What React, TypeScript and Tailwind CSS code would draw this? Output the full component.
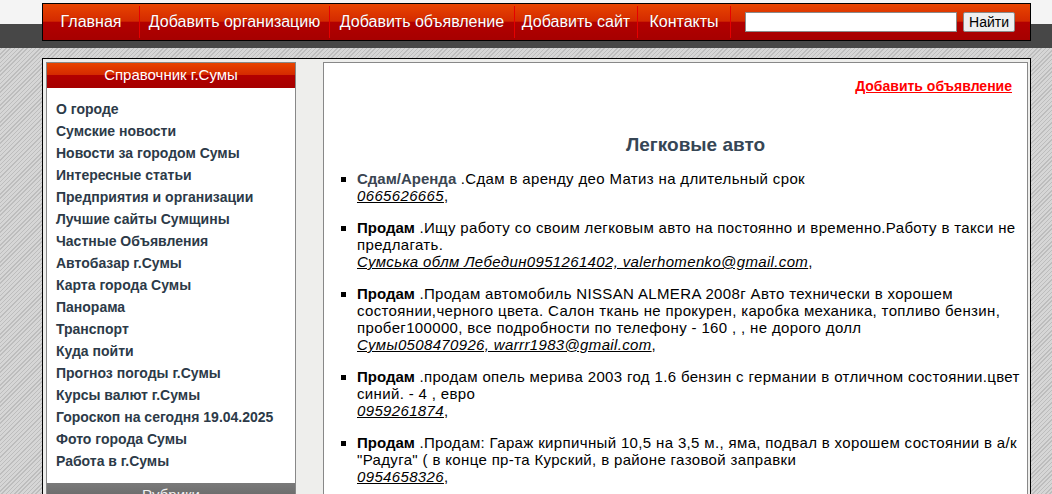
import React from "react";

const navItems: { label: string; w: string }[] = [
  { label: "Главная", w: "w-[96px]" },
  { label: "Добавить организацию", w: "w-[189px]" },
  { label: "Добавить объявление", w: "w-[184px]" },
  { label: "Добавить сайт", w: "w-[122px]" },
  { label: "Контакты", w: "w-[92px]" },
];

const links = [
  "О городе",
  "Сумские новости",
  "Новости за городом Сумы",
  "Интересные статьи",
  "Предприятия и организации",
  "Лучшие сайты Сумщины",
  "Частные Объявления",
  "Автобазар г.Сумы",
  "Карта города Сумы",
  "Панорама",
  "Транспорт",
  "Куда пойти",
  "Прогноз погоды г.Сумы",
  "Курсы валют г.Сумы",
  "Гороскоп на сегодня 19.04.2025",
  "Фото города Сумы",
  "Работа в г.Сумы",
];

const ads: { label: string; first?: boolean; text: string; contact: string }[] = [
  {
    label: "Сдам/Аренда",
    first: true,
    text: ".Сдам в аренду део Матиз на длительный срок",
    contact: "0665626665",
  },
  {
    label: "Продам",
    text: ".Ищу работу со своим легковым авто на постоянно и временно.Работу в такси не предлагать.",
    contact: "Сумська облм Лебедин0951261402, valerhomenko@gmail.com",
  },
  {
    label: "Продам",
    text: ".Продам автомобиль NISSAN ALMERA 2008г Авто технически в хорошем состоянии,черного цвета. Салон ткань не прокурен, каробка механика, топливо бензин, пробег100000, все подробности по телефону - 160 , , не дорого долл",
    contact: "Сумы0508470926, warrr1983@gmail.com",
  },
  {
    label: "Продам",
    text: ".продам опель мерива 2003 год 1.6 бензин с германии в отличном состоянии.цвет синий. - 4 , евро",
    contact: "0959261874",
  },
  {
    label: "Продам",
    text: '.Продам: Гараж кирпичный 10,5 на 3,5 м., яма, подвал в хорошем состоянии в а/к "Радуга" ( в конце пр-та Курский, в районе газовой заправки',
    contact: "0954658326",
  },
];

export default function App() {
  return (
    <div className="min-h-screen bg-[repeating-linear-gradient(135deg,#d6d6d6_0px,#d6d6d6_2px,#bdbdbd_2px,#bdbdbd_3px)] font-['Liberation_Sans',Arial,sans-serif]">
      {/* header band */}
      <div className="h-[48px] bg-[linear-gradient(to_bottom,#f4f4f4_0px,#f4f4f4_24px,#474747_24px,#474747_48px)] pt-[3px]">
        <div className="ml-[42px] w-[989px] h-[38px] border border-black flex items-stretch bg-[linear-gradient(to_bottom,#e84400_0%,#d42a00_48%,#b20000_50%,#a60000_100%)]">
          {navItems.map((it) => (
            <React.Fragment key={it.label}>
              <div
                className={`${it.w} flex items-center justify-center text-white text-[16px] [text-shadow:0_0_1px_rgba(0,0,0,0.3)]`}
              >
                {it.label}
              </div>
              <div className="w-px bg-[#e60000] my-[2px]" />
            </React.Fragment>
          ))}
          <div className="flex items-center pl-[14px] gap-[6px]">
            <input
              type="text"
              className="w-[212px] h-[20px] bg-white border border-[#8a8a8a] outline-none"
            />
            <button className="h-[20px] w-[52px] bg-[#efefef] border border-[#8a8a8a] rounded-[2px] text-[14px] text-black leading-none">
              Найти
            </button>
          </div>
        </div>
      </div>

      {/* main container */}
      <div className="ml-[42px] mt-[10px] w-[989px] border border-black bg-[#eeeeec] pt-[3px] pl-[3px] pr-[2px] flex items-start">
        {/* sidebar */}
        <div className="w-[250px] shrink-0 border border-[#888] bg-white">
          <div className="h-[25px] flex items-center justify-center text-white text-[15px] bg-[linear-gradient(to_bottom,#e84400_0%,#d42a00_48%,#b20000_50%,#a60000_100%)]">
            Справочник г.Сумы
          </div>
          <ul className="pt-[10px] pl-[9px] pb-[11px]">
            {links.map((l) => (
              <li
                key={l}
                className="text-[14px] font-bold leading-[22px] text-[#2c3a48]"
              >
                {l}
              </li>
            ))}
          </ul>
          <div className="h-[25px] flex items-center justify-center text-[#f0f0f0] text-[15px] bg-[linear-gradient(to_bottom,#7a7a7a,#5e5e5e)]">
            Рубрики
          </div>
        </div>

        {/* content */}
        <div className="ml-[27px] flex-1 border border-[#888] bg-white min-h-[440px]">
          <div className="pt-[15px] pr-[15px] text-right leading-[16px]">
            <a className="text-[14px] font-bold text-[#ff0000] underline">
              Добавить объявление
            </a>
          </div>
          <h1 className="mt-[40px] pl-[40px] text-center text-[19px] leading-[22px] font-bold text-[#364655]">
            Легковые авто
          </h1>
          <ul className="mt-[14px] pl-[33px] mr-[4px] list-[square] text-[15px] tracking-[0.35px] leading-[17px] text-black">
            {ads.map((a, i) => (
              <li key={i} className="mb-[15px]">
                <b
                  className={`tracking-normal ${
                    a.first ? "text-[#3a4552]" : "text-black"
                  }`}
                >
                  {a.label}
                </b>{" "}
                {a.text}
                <br />
                <a className="italic underline">{a.contact}</a>,
              </li>
            ))}
          </ul>
        </div>
      </div>
    </div>
  );
}
